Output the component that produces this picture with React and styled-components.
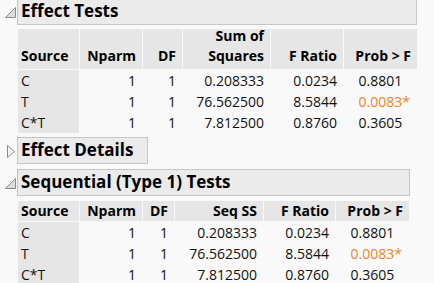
import React from "react";
import styled, { createGlobalStyle } from "styled-components";

const Global = createGlobalStyle`
  html, body { margin: 0; padding: 0; background: #f9f9f9; }
  body { font-family: "Open Sans", "Noto Sans", sans-serif; color: #111; overflow: hidden; }
`;

const Page = styled.div`
  display: flex;
  flex-direction: column;
  margin-top: -2px;
`;

const Outline = styled.section`
  display: flex;
  flex-direction: column;
  margin-top: ${(p) => p.$gap || 0}px;
`;

const TitleRow = styled.div`
  display: flex;
  align-items: flex-start;
`;

const Toggle = styled.svg`
  width: 17px;
  height: 27px;
  flex: none;
`;

const TitleBox = styled.div`
  box-sizing: border-box;
  width: ${(p) => p.$w}px;
  height: 27px;
  background: #ebebeb;
  border: 1px solid #c6c6c6;
  padding: 0 0 0 3px;
  font-weight: 700;
  font-size: 17px;
  line-height: 24px;
  color: #000;
  white-space: nowrap;
  overflow: hidden;
`;

const Body = styled.div`
  padding-left: 18px;
  margin-top: ${(p) => p.$gap}px;
`;

const Grid = styled.div`
  display: grid;
  grid-template-columns: ${(p) => p.$cols};
  column-gap: 1px;
  font-size: 14px;
`;

const Head = styled.div`
  background: #e6e6e6;
  font-weight: 700;
  color: #000;
  line-height: 20px;
  padding: ${(p) => (p.$tall ? "0 6px 3px 3px" : "0 6px 0 3px")};
  height: ${(p) => (p.$tall ? 40 : 20)}px;
  box-sizing: border-box;
  display: flex;
  flex-direction: column;
  justify-content: flex-end;
  align-items: ${(p) => (p.$left ? "flex-start" : "flex-end")};
  text-align: ${(p) => (p.$left ? "left" : "right")};
  margin-bottom: 1px;
  white-space: nowrap;
`;

const Cell = styled.div`
  height: 21px;
  line-height: 21px;
  white-space: nowrap;
  background: ${(p) => (p.$label ? "#e6e6e6" : "transparent")};
  text-align: ${(p) => (p.$label ? "left" : "right")};
  padding: ${(p) => (p.$label ? "0 0 0 3px" : p.$prob ? "0 7px 0 0" : "0 6px 0 0")};
  color: ${(p) => (p.$sig ? "#f0842c" : "#111")};
`;

const Star = styled.span`
  visibility: ${(p) => (p.$show ? "visible" : "hidden")};
`;

const OpenIcon = () => (
  <Toggle viewBox="0 0 17 27">
    <polygon points="15.5,9.5 15.5,19.5 5.5,19.5" fill="#dcdcdc" stroke="#8a8a8a" strokeWidth="1" />
  </Toggle>
);

const ClosedIcon = () => (
  <Toggle viewBox="0 0 17 27">
    <polygon points="7.5,8.5 14.5,14.5 7.5,20.5" fill="#f4f4f4" stroke="#8a8a8a" strokeWidth="1" />
  </Toggle>
);

const rows = [
  ["C", "1", "1", "0.208333", "0.0234", "0.8801", false],
  ["T", "1", "1", "76.562500", "8.5844", "0.0083", true],
  ["C*T", "1", "1", "7.812500", "0.8760", "0.3605", false],
];

const Table = ({ cols, heads, tall }) => (
  <Grid $cols={cols}>
    {heads.map((h, i) => (
      <Head key={i} $left={i === 0} $tall={tall}>
        {h.map((line, j) => (
          <span key={j}>{line}</span>
        ))}
      </Head>
    ))}
    {rows.map((r) => (
      <React.Fragment key={r[0]}>
        <Cell $label>{r[0]}</Cell>
        <Cell>{r[1]}</Cell>
        <Cell>{r[2]}</Cell>
        <Cell>{r[3]}</Cell>
        <Cell>{r[4]}</Cell>
        <Cell $prob $sig={r[6]}>
          {r[5]}
          <Star $show={r[6]}>*</Star>
        </Cell>
      </React.Fragment>
    ))}
  </Grid>
);

export default function App() {
  return (
    <>
      <Global />
      <Page>
        <Outline>
          <TitleRow>
            <OpenIcon />
            <TitleBox $w={400}>Effect Tests</TitleBox>
          </TitleRow>
          <Body $gap={4}>
            <Table
              tall
              cols="61px 62px 39px 87px 72px 73px"
              heads={[["Source"], ["Nparm"], ["DF"], ["Sum of", "Squares"], ["F Ratio"], ["Prob > F"]]}
            />
          </Body>
        </Outline>
        <Outline $gap={4}>
          <TitleRow>
            <ClosedIcon />
            <TitleBox $w={131}>Effect Details</TitleBox>
          </TitleRow>
        </Outline>
        <Outline $gap={5}>
          <TitleRow>
            <OpenIcon />
            <TitleBox $w={393}>Sequential (Type 1) Tests</TitleBox>
          </TitleRow>
          <Body $gap={5}>
            <Table
              cols="61px 62px 31px 88px 71px 73px"
              heads={[["Source"], ["Nparm"], ["DF"], ["Seq SS"], ["F Ratio"], ["Prob > F"]]}
            />
          </Body>
        </Outline>
      </Page>
    </>
  );
}
